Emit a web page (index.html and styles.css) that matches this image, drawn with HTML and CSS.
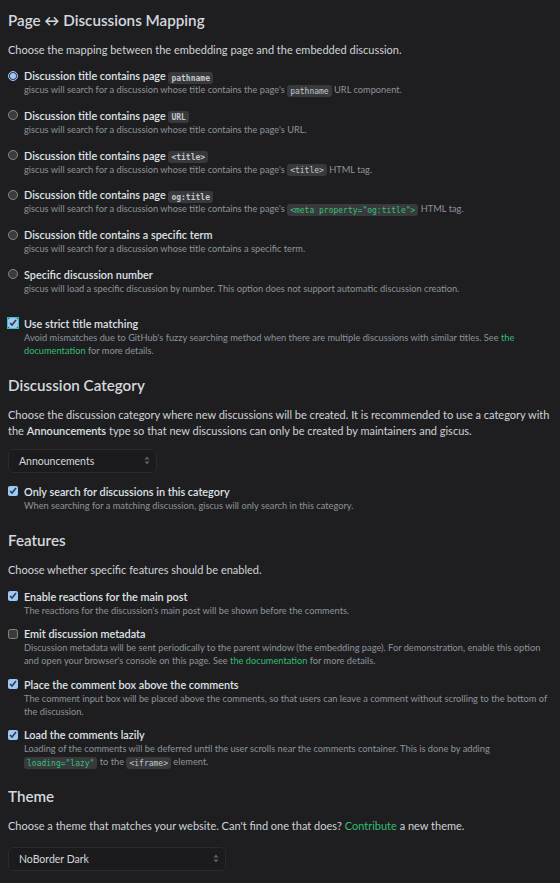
FILE: index.html
```html
<!DOCTYPE html>
<html lang="en">
<head>
<meta charset="utf-8">
<title>giscus configuration</title>
<link rel="stylesheet" href="styles.css">
</head>
<body>
<main class="config">
  <section class="section">
    <h3 class="heading">Page ↔ Discussions Mapping</h3>
    <p class="lead">Choose the mapping between the embedding page and the embedded discussion.</p>
    <div class="options radios">
      <label class="option">
        <input class="control" type="radio" name="mapping" checked>
        <span class="option-body">
          <span class="option-title">Discussion title contains page <code>pathname</code></span>
          <span class="option-desc">giscus will search for a discussion whose title contains the page's <code>pathname</code> URL component.</span>
        </span>
      </label>
      <label class="option">
        <input class="control" type="radio" name="mapping">
        <span class="option-body">
          <span class="option-title">Discussion title contains page <code>URL</code></span>
          <span class="option-desc">giscus will search for a discussion whose title contains the page's URL.</span>
        </span>
      </label>
      <label class="option">
        <input class="control" type="radio" name="mapping">
        <span class="option-body">
          <span class="option-title">Discussion title contains page <code>&lt;title&gt;</code></span>
          <span class="option-desc">giscus will search for a discussion whose title contains the page's <code>&lt;title&gt;</code> HTML tag.</span>
        </span>
      </label>
      <label class="option">
        <input class="control" type="radio" name="mapping">
        <span class="option-body">
          <span class="option-title">Discussion title contains page <code>og:title</code></span>
          <span class="option-desc">giscus will search for a discussion whose title contains the page's <code class="code-green">&lt;meta property="og:title"&gt;</code> HTML tag.</span>
        </span>
      </label>
      <label class="option">
        <input class="control" type="radio" name="mapping">
        <span class="option-body">
          <span class="option-title">Discussion title contains a specific term</span>
          <span class="option-desc">giscus will search for a discussion whose title contains a specific term.</span>
        </span>
      </label>
      <label class="option">
        <input class="control" type="radio" name="mapping">
        <span class="option-body">
          <span class="option-title">Specific discussion number</span>
          <span class="option-desc">giscus will load a specific discussion by number. This option does not support automatic discussion creation.</span>
        </span>
      </label>
    </div>
    <label class="option strict">
      <input class="control check focused" type="checkbox" checked>
      <span class="option-body">
        <span class="option-title">Use strict title matching</span>
        <span class="option-desc">Avoid mismatches due to GitHub's fuzzy searching method when there are multiple discussions with similar titles. See <a class="link" href="#">the documentation</a> for more details.</span>
      </span>
    </label>
  </section>

  <section class="section">
    <h3 class="heading">Discussion Category</h3>
    <p class="lead">Choose the discussion category where new discussions will be created. It is recommended to use a category with the <strong>Announcements</strong> type so that new discussions can only be created by maintainers and giscus.</p>
    <div class="select select-category">
      <span class="select-value">Announcements</span>
      <svg class="select-arrows" width="6" height="9" viewBox="0 0 6 9"><path d="M3 0.5 L5.5 3.5 H0.5 Z M3 8.5 L0.5 5.5 H5.5 Z" fill="#5f6166"/></svg>
    </div>
    <label class="option">
      <input class="control check" type="checkbox" checked>
      <span class="option-body">
        <span class="option-title">Only search for discussions in this category</span>
        <span class="option-desc">When searching for a matching discussion, giscus will only search in this category.</span>
      </span>
    </label>
  </section>

  <section class="section">
    <h3 class="heading">Features</h3>
    <p class="lead">Choose whether specific features should be enabled.</p>
    <div class="options checks">
      <label class="option">
        <input class="control check" type="checkbox" checked>
        <span class="option-body">
          <span class="option-title">Enable reactions for the main post</span>
          <span class="option-desc">The reactions for the discussion's main post will be shown before the comments.</span>
        </span>
      </label>
      <label class="option">
        <input class="control check" type="checkbox">
        <span class="option-body">
          <span class="option-title">Emit discussion metadata</span>
          <span class="option-desc">Discussion metadata will be sent periodically to the parent window (the embedding page). For demonstration, enable this option and open your browser's console on this page. See <a class="link" href="#">the documentation</a> for more details.</span>
        </span>
      </label>
      <label class="option">
        <input class="control check" type="checkbox" checked>
        <span class="option-body">
          <span class="option-title">Place the comment box above the comments</span>
          <span class="option-desc">The comment input box will be placed above the comments, so that users can leave a comment without scrolling to the bottom of the discussion.</span>
        </span>
      </label>
      <label class="option">
        <input class="control check" type="checkbox" checked>
        <span class="option-body">
          <span class="option-title">Load the comments lazily</span>
          <span class="option-desc">Loading of the comments will be deferred until the user scrolls near the comments container. This is done by adding <code class="code-green">loading="lazy"</code> to the <code>&lt;iframe&gt;</code> element.</span>
        </span>
      </label>
    </div>
  </section>

  <section class="section">
    <h3 class="heading">Theme</h3>
    <p class="lead">Choose a theme that matches your website. Can't find one that does? <a class="link" href="#">Contribute</a> a new theme.</p>
    <div class="select select-theme">
      <span class="select-value">NoBorder Dark</span>
      <svg class="select-arrows" width="6" height="9" viewBox="0 0 6 9"><path d="M3 0.5 L5.5 3.5 H0.5 Z M3 8.5 L0.5 5.5 H5.5 Z" fill="#5f6166"/></svg>
    </div>
  </section>
</main>
</body>
</html>
```

FILE: styles.css
```css
:root {
  color-scheme: dark;
}

html, body {
  margin: 0;
  padding: 0;
  background: #1e1e20;
}

body {
  font-family: Lato, "Noto Sans", sans-serif;
  color: #d4d8dc;
  overflow: hidden;
}

.config {
  padding: 10px 8px 0 8px;
}

.section + .section {
  margin-top: 18px;
}

.heading {
  margin: 0 0 12px 0;
  font-size: 15.2px;
  line-height: 20px;
  font-weight: 600;
  color: #d5d9de;
}

.lead {
  margin: 0;
  font-size: 11px;
  line-height: 16px;
  color: #d0d4d8;
}

.lead strong {
  font-weight: 600;
  color: #dde1e5;
}

.options {
  display: flex;
  flex-direction: column;
}

.radios {
  margin-top: 10px;
  gap: 11.8px;
}

.checks {
  margin-top: 11px;
  gap: 9.5px;
}

.option {
  display: flex;
  align-items: flex-start;
  gap: 6px;
}

.option-body {
  display: flex;
  flex-direction: column;
}

.option-title {
  font-size: 10.85px;
  line-height: 15px;
  font-weight: 600;
  color: #dfe3e7;
}

.option-desc {
  font-size: 9.25px;
  line-height: 13px;
  color: #8d949c;
}

.control {
  width: 10px;
  height: 10px;
  margin: 2.5px 0 0 0;
  flex: none;
}

.strict {
  margin-top: 21px;
}

.focused {
  outline: 1px solid #37c5b0;
  outline-offset: 0;
}

code {
  font-family: "DejaVu Sans Mono", "Liberation Mono", monospace;
  font-size: 8px;
  line-height: 1;
  padding: 1.5px 3px;
  border-radius: 3px;
  background: #38393c;
  color: #c4c8cc;
}

.option-title code {
  font-weight: 700;
}

.code-green {
  color: #34c17a;
}

.link {
  color: #2fbf71;
  text-decoration: none;
}

.select {
  display: flex;
  align-items: center;
  justify-content: space-between;
  box-sizing: border-box;
  height: 24px;
  margin-top: 10px;
  padding: 0 6px 0 10px;
  border: 1px solid #2a2a2d;
  border-radius: 5px;
  background: #1b1b1d;
}

.select-category {
  width: 149px;
  margin-bottom: 11px;
}

.select-theme {
  width: 218px;
  margin-top: 12.5px;
}

.select-value {
  font-size: 10.5px;
  color: #d4d8dc;
}

.select-arrows {
  display: block;
}
```
